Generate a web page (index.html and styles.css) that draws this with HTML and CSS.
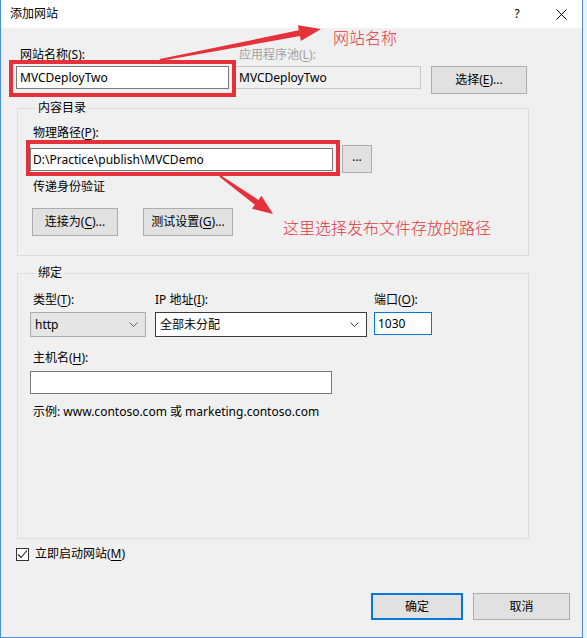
FILE: index.html
```html
<!DOCTYPE html>
<html lang="zh-CN">
<head>
<meta charset="utf-8">
<title>添加网站</title>
<link rel="stylesheet" href="styles.css">
</head>
<body>
<div class="window">
  <div class="titlebar">
    <span class="title">添加网站</span>
    <span class="tb-help">?</span>
    <span class="tb-close"><svg width="11" height="11" viewBox="0 0 11 11"><path d="M0.5 0.5 L10.5 10.5 M10.5 0.5 L0.5 10.5" stroke="#000" stroke-width="1" fill="none"/></svg></span>
  </div>
  <div class="content">
    <div class="site-row">
      <div class="lbl pl4">网站名称(<u>S</u>):</div>
      <div class="lbl disabled pl7">应用程序池(<u>L</u>):</div>
      <div></div>
      <div class="textbox w-site">MVCDeployTwo</div>
      <div class="textbox readonly w-pool">MVCDeployTwo</div>
      <div class="btn btn-select">选择(<u>E</u>)...</div>
    </div>

    <fieldset class="group g-content">
      <legend>内容目录</legend>
      <div class="lbl pl3">物理路径(<u>P</u>):</div>
      <div class="path-row">
        <div class="textbox w-path">D:\Practice\publish\MVCDemo</div>
        <div class="btn btn-browse">...</div>
      </div>
      <div class="lbl pl3 mt6">传递身份验证</div>
      <div class="auth-row">
        <div class="btn btn-connect">连接为(<u>C</u>)...</div>
        <div class="btn btn-test">测试设置(<u>G</u>)...</div>
      </div>
    </fieldset>

    <fieldset class="group g-binding">
      <legend>绑定</legend>
      <div class="bind-grid">
        <div class="lbl pl3">类型(<u>T</u>):</div>
        <div class="lbl">IP 地址(<u>I</u>):</div>
        <div class="lbl">端口(<u>O</u>):</div>
        <div class="combo combo-type"><span>http</span><svg class="chev" width="9" height="5" viewBox="0 0 9 5"><polyline points="0.5,0.5 4.5,4.5 8.5,0.5" fill="none" stroke="#606060" stroke-width="1"/></svg></div>
        <div class="combo combo-ip"><span>全部未分配</span><svg class="chev" width="9" height="5" viewBox="0 0 9 5"><polyline points="0.5,0.5 4.5,4.5 8.5,0.5" fill="none" stroke="#404040" stroke-width="1"/></svg></div>
        <div class="textbox port">1030</div>
      </div>
      <div class="lbl pl3 mt13">主机名(<u>H</u>):</div>
      <div class="textbox w-host"></div>
      <div class="lbl pl3 mt10">示例: www.contoso.com 或 marketing.contoso.com</div>
    </fieldset>

    <div class="check-row">
      <span class="checkbox"><svg width="11" height="11" viewBox="0 0 11 11"><polyline points="1,5.5 4,8.5 10,1.5" fill="none" stroke="#222" stroke-width="1.1"/></svg></span>
      <span>立即启动网站(<u>M</u>)</span>
    </div>

    <div class="footer">
      <div class="btn btn-ok">确定</div>
      <div class="btn btn-cancel">取消</div>
    </div>
  </div>

  <div class="annot">
    <svg width="587" height="638" viewBox="0 0 587 638">
      <rect x="11" y="62" width="223" height="33" fill="none" stroke="#e5323a" stroke-width="4"/>
      <rect x="28" y="142" width="310" height="32" fill="none" stroke="#e5323a" stroke-width="4"/>
      <polygon points="159.8,59 298.8,30.3 297.9,25.3 321,29 300.9,41 300,36.1 160.2,61" fill="#e5323a"/>
      <polygon points="220.6,175.2 258.4,199.9 261.4,195.8 273,214 252,208.8 254.9,204.7 219.4,176.8" fill="#e5323a"/>
    </svg>
    <div class="note note-name">网站名称</div>
    <div class="note note-path">这里选择发布文件存放的路径</div>
  </div>
</div>
</body>
</html>
```

FILE: styles.css
```css
html, body {
  margin: 0;
  padding: 0;
}
body {
  background: #eef2f6;
  font-family: "Noto Sans", "Noto Sans CJK SC", sans-serif;
  font-size: 12px;
  color: #000;
}
u {
  text-decoration: underline;
  text-underline-offset: 2px;
}
.window {
  position: relative;
  width: 583px;
  height: 638px;
  box-sizing: border-box;
  border-left: 1px solid #4a8fd8;
  border-right: 1px solid #4a8fd8;
  border-bottom: 1px solid #4a8fd8;
  background: #f0f0f0;
  display: flex;
  flex-direction: column;
}
.titlebar {
  flex: none;
  height: 28px;
  background: #fff;
  display: flex;
  align-items: center;
  padding-left: 9px;
}
.title {
  flex: 1;
  line-height: 16px;
}
.tb-help {
  width: 46px;
  text-align: center;
  font-size: 12px;
  line-height: 16px;
}
.tb-close {
  width: 42px;
  display: flex;
  justify-content: center;
  align-items: center;
}
.content {
  flex: 1;
  display: flex;
  flex-direction: column;
  padding: 19px 0 0 15px;
}
.lbl {
  line-height: 16px;
  white-space: nowrap;
}
.disabled { color: #a0a0a0; }
.pl3 { padding-left: 3px; }
.pl4 { padding-left: 4px; }
.pl7 { padding-left: 7px; }
.mt6 { margin-top: 6px; }
.mt10 { margin-top: 10px; }
.mt13 { margin-top: 13px; }

.textbox {
  box-sizing: border-box;
  height: 23px;
  border: 1px solid #7a7a7a;
  background: #fff;
  padding-left: 3px;
  line-height: 21px;
  white-space: nowrap;
  overflow: hidden;
}
.textbox.readonly {
  background: #f0f0f0;
  border-color: #c6c6c6;
  padding-left: 6px;
}
.btn {
  box-sizing: border-box;
  height: 28px;
  border: 1px solid #adadad;
  background: #e1e1e1;
  display: flex;
  align-items: center;
  justify-content: center;
  line-height: 16px;
  white-space: nowrap;
}

.site-row {
  display: grid;
  grid-template-columns: 213px 189px 103px;
  column-gap: 3px;
  row-gap: 3px;
  align-items: start;
}
.w-site { width: 213px; }
.w-pool { width: 189px; }
.btn-select {
  width: 96px;
  margin-left: 7px;
}

.group {
  width: 512px;
  box-sizing: border-box;
  margin: 6px 0 0 1px;
  padding: 9px 0 19px 12px;
  border: 1px solid #dcdcdc;
  min-inline-size: 0;
}
.group legend {
  margin-left: 6px;
  padding: 0 2px;
  line-height: 16px;
}
.g-content {
  padding-top: 0;
}
.g-content > .lbl:first-of-type {
  margin-top: 9px;
}
.path-row {
  display: flex;
  align-items: center;
  margin-top: 4px;
  height: 28px;
}
.w-path {
  width: 303px;
  padding-left: 2px;
}
.btn-browse {
  width: 30px;
  margin-left: 9px;
  padding-bottom: 4px;
}
.auth-row {
  display: flex;
  gap: 25px;
  margin-top: 13px;
  padding-left: 2px;
}
.btn-connect { width: 86px; }
.btn-test { width: 90px; }

.g-binding {
  margin-top: 9px;
  padding-top: 11px;
  padding-bottom: 118px;
}
.bind-grid {
  display: grid;
  grid-template-columns: 118px 212px 58px;
  column-gap: 7px;
  row-gap: 4px;
  align-items: start;
}
.combo {
  box-sizing: border-box;
  height: 25px;
  display: flex;
  align-items: center;
  justify-content: space-between;
  padding: 0 7px 0 4px;
  line-height: 16px;
}
.combo-type {
  width: 116px;
  background: #e5e5e5;
  border: 1px solid #acacac;
}
.combo-ip {
  width: 212px;
  background: #fff;
  border: 1px solid #3c3c3c;
}
.chev { flex: none; }
.port {
  width: 58px;
  border-color: #0078d7;
}
.w-host {
  width: 302px;
  margin-top: 5px;
}

.check-row {
  display: flex;
  align-items: center;
  gap: 6px;
  margin-top: 7px;
  line-height: 16px;
}
.checkbox {
  box-sizing: border-box;
  width: 13px;
  height: 13px;
  border: 1px solid #333;
  background: #fff;
  display: flex;
  align-items: center;
  justify-content: center;
}
.footer {
  display: flex;
  justify-content: flex-end;
  gap: 10px;
  margin-top: 31px;
  padding-right: 12px;
}
.btn-ok {
  width: 92px;
  height: 27px;
  border: 2px solid #0078d7;
}
.btn-cancel {
  width: 97px;
  height: 27px;
}

.annot {
  position: absolute;
  left: -1px;
  top: 0;
  width: 587px;
  height: 638px;
  pointer-events: none;
}
.annot svg {
  position: absolute;
  left: 0;
  top: 0;
}
.note {
  position: absolute;
  color: #e0353f;
  font-family: "Noto Sans CJK SC", sans-serif;
  font-size: 16px;
  line-height: 16px;
  font-weight: 300;
  white-space: nowrap;
}
.note-name {
  left: 333px;
  top: 29px;
}
.note-path {
  left: 283px;
  top: 219px;
}
```
